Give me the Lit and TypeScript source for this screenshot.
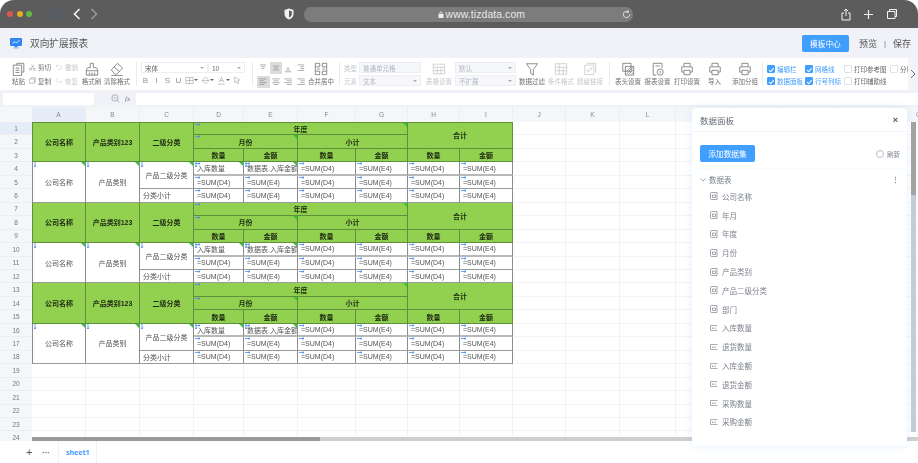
import { css, html, LitElement, svg } from "lit";
import { customElement } from "lit/decorators.js";

type Cell = {
	r: number;
	c: number;
	rs?: number;
	cs?: number;
	text?: string;
	kind: "head" | "center" | "left";
	arrow?: "h" | "v" | "both";
	tri?: boolean;
	thick?: boolean;
};

const S = (body: unknown, w = 14, h = 14) => html`<svg
	width=${w}
	height=${h}
	viewBox="0 0 16 16"
	fill="none"
	stroke="currentColor"
	stroke-width="0.9"
>${body}</svg>`;

const printer = S(svg`<path d="M4.5 5V1.5h7V5M2 5.5h12v6h-2.5M4.5 11.5H2v-6M4.5 9.5h7v5h-7z" />`);
const icons = {
	paste: S(svg`<path d="M5.5 3.5V1.5h8v10h-2M1.5 3.5H11v12H1.5zM4 7h4.5M4 9.5h4.5M4 12h4.5" />`),
	brush: S(svg`<path d="M6 1.5h3.5v5H13l1.5 2.5v6h-13V9L3 6.5h3zM1.5 10h13M5 15v-3M8 15v-3M11 15v-3" />`),
	eraser: S(svg`<path d="M1.5 9 8.5 1.5 14.5 7l-7 7H5.5zM4.5 5.5 11 11M1.500 15.500h13" />`),
	merge: S(svg`<path d="M1.5 1.5h5v4h-5zM9.5 1.5h5v4h-5zM1.5 10.5h5v4h-5zM9.5 10.5h5v4h-5zM1.5 5.5v5M14.5 5.5v5M3.5 8h3M12.5 8h-3" />`),
	table: S(svg`<path d="M1.5 2.5h13v11h-13zM1.5 6h13M1.5 9.8h13M6 6v7.5M10.3 6v7.5" />`),
	filter: S(svg`<path d="M1.5 2h13L9.500 8.500V15l-3-2V8.500z" />`),
	cond: S(svg`<path d="M1.5 2h13v12h-13zM1.5 6h13M1.5 10h13M6 2v12M10.5 6v8" />`),
	link: S(svg`<path d="M4 1.5h10.5V12M2 3.5h10.5v11H2zM6 10.500l3-3M5.500 8.500 4.500 10l1.500 1.500L7.500 10.500M9.500 9.500l1-1.500L9 6.500 7.500 7.500" />`),
	head: S(svg`<path d="M2 1.5h9.5v9H2zM5 5h9.500v10H5z" /><path d="M6 14l8-8M6 11l5-5M9 14l5-5M12 14l2-2" />`),
	report: S(svg`<path d="M6 15H2.5V1.5h10V7M5 4.5h5" /><circle cx="10.5" cy="11.5" r="3.5" /><path d="M10.5 10v3" />`),
	printer,
};

const small = {
	cut: S(svg`<circle cx="3.5" cy="12" r="2.5" /><circle cx="12.5" cy="12" r="2.5" /><path d="M5 10 11 1.5M11 10 5 1.5" />`, 9, 9),
	copy: S(svg`<path d="M5 4V1.5h9.5v10H12M1.5 4.5H12v10H1.5z" />`, 9, 9),
	undo: S(svg`<path d="M5 2 2 5l3 3M2 5h8.5a3.5 3.5 0 0 1 0 7H5" />`, 9, 9),
	redo: S(svg`<path d="M11 8l3 3-3 3M14 11H5a3 3 0 0 1 0-6h1" />`, 9, 9),
	border: S(svg`<path d="M1.5 2.5h13v11h-13zM8 2.5v11M1.5 8h13" />`, 9, 9),
	fill: S(svg`<path d="M8 1.5 14 8l-6 6-6-6zM2 8h12" />`, 9, 9),
	color: S(svg`<path d="M4 11 8 2l4 9M5.5 8h5M2 14.5h12" />`, 9, 9),
	clear: S(svg`<path d="M3 2l9 5-3.5 1.5L10 13l-2 1-2-4.5L3 12z" />`, 9, 9),
	zoom: S(svg`<circle cx="7" cy="7" r="5.5" /><path d="M11 11l4 4M4.5 7h5" />`, 9, 9),
};

const alignIcon = (rows: number[][]) =>
	S(svg`${rows.map(
		([x1, x2, y]) => svg`<line x1=${x1} x2=${x2} y1=${y} y2=${y} />`,
	)}`, 10, 10);

const columnWidths = [54, 54, 54, 50, 54, 58, 52, 52, 53, 53, 54, 56, 54, 54, 54, 54, 54];
// M to P sit under the data panel, so their letters never show
const letters = "ABCDEFGHIJKL    Q".split("").map((l) => l.trim());
const rowCount = 24;

const buildCells = () => {
	const cells: Cell[] = [];
	for (const r0 of [1, 7, 13]) {
		const add = (dr: number, c: number, rest: Omit<Cell, "r" | "c">) =>
			cells.push({ r: r0 + dr, c, ...rest });
		add(0, 0, { rs: 3, text: "公司名称", kind: "head" });
		add(0, 1, { rs: 3, text: "产品类别123", kind: "head" });
		add(0, 2, { rs: 3, text: "二级分类", kind: "head" });
		add(0, 3, { cs: 4, text: "年度", kind: "head", arrow: "h", tri: true });
		add(0, 7, { rs: 2, cs: 2, text: "合计", kind: "head" });
		add(1, 3, { cs: 2, text: "月份", kind: "head", arrow: "h", tri: true });
		add(1, 5, { cs: 2, text: "小计", kind: "head" });
		[3, 4, 5, 6, 7, 8].forEach((c, i) =>
			add(2, c, { text: i % 2 ? "金额" : "数量", kind: "head" }),
		);
		add(3, 0, { rs: 3, text: "公司名称", kind: "center", arrow: "v", tri: true });
		add(3, 1, { rs: 3, text: "产品类别", kind: "center", arrow: "v", tri: true });
		add(3, 2, { rs: 2, text: "产品二级分类", kind: "center", arrow: "v", tri: true });
		add(5, 2, { text: "分类小计", kind: "left" });
		for (let dr = 3; dr < 6; dr++) {
			[3, 4, 5, 6, 7, 8].forEach((c, i) => {
				const sum = i % 2 ? "=SUM(E4)" : "=SUM(D4)";
				let text = sum;
				if (dr === 3 && c === 3) text = "入库数量";
				if (dr === 3 && c === 4) text = "数据表.入库金额";
				add(dr, c, {
					text,
					kind: "left",
					arrow: dr === 3 && c < 5 ? "both" : "h",
					tri: dr === 3 && c < 5,
					thick: dr === 3,
				});
			});
		}
	}
	return cells;
};

const fields = [
	["公司名称", "d"],
	["年月", "d"],
	["年度", "d"],
	["月份", "d"],
	["产品类别", "d"],
	["产品二级分类", "d"],
	["部门", "d"],
	["入库数量", "m"],
	["退货数量", "m"],
	["入库金额", "m"],
	["退货金额", "m"],
	["采购数量", "m"],
	["采购金额", "m"],
];

@customElement("app-root")
export class AppRoot extends LitElement {
	static override styles = css`
		:host {
			display: block;
			width: 918px;
			height: 463px;
			background: #fff;
			font-family: "Liberation Sans", "Noto Sans CJK SC", sans-serif;
			color: #606266;
		}
		.app {
			position: relative;
			width: 918px;
			height: 463px;
			overflow: hidden;
			display: flex;
			flex-direction: column;
			filter: blur(0.4px);
		}
		.browser {
			height: 28px;
			flex: none;
			background: #5c5c5c;
			border-radius: 14px 14px 0 0;
			display: flex;
			align-items: center;
			color: #f4f4f4;
			padding-left: 7px;
		}
		.dot {
			width: 6px;
			height: 6px;
			border-radius: 50%;
			margin-right: 3.7px;
			flex: none;
		}
		.side {
			margin-left: 14px;
			width: 13px;
			height: 11px;
			box-sizing: border-box;
			border: 1px solid #4e5d6e;
			border-radius: 2px;
			background: linear-gradient(90deg, #5c5c5c 3px, #4e5d6e 3px, #4e5d6e 4px, #5c5c5c 4px);
			flex: none;
		}
		.nav {
			display: flex;
			gap: 9px;
			margin-left: 10px;
		}
		.shield {
			margin-left: 186px;
			display: flex;
		}
		.address {
			margin-left: 10px;
			width: 329px;
			height: 15px;
			background: #7c7c7c;
			border-radius: 7px;
			display: flex;
			align-items: center;
			justify-content: flex-end;
			padding-right: 2px;
			box-sizing: border-box;
			font-size: 10.4px;
			color: #e8e8e8;
			gap: 2px;
			flex: none;
		}
		.url {
			margin-right: 95px;
			letter-spacing: 0.1px;
		}
		.browser-right {
			margin-left: 208px;
			display: flex;
			gap: 12px;
			align-items: center;
		}
		.titlebar {
			height: 30px;
			flex: none;
			background: #f0f2f7;
			display: flex;
			align-items: center;
			padding: 0 7px 0 10px;
		}
		.title {
			font-size: 9.7px;
			margin-left: 8px;
			color: #555;
			font-family: "Noto Sans CJK SC", sans-serif;
		}
		.primary {
			background: #409eff;
			color: #fff;
			border-radius: 2px;
			display: flex;
			align-items: center;
			justify-content: center;
			font-size: 7.7px;
			font-family: "Noto Sans CJK SC", sans-serif;
		}
		.template {
			margin-left: auto;
			width: 47px;
			height: 17px;
		}
		.title-action {
			font-size: 9px;
			color: #555;
			font-family: "Noto Sans CJK SC", sans-serif;
		}
		.preview {
			margin-left: 10px;
		}
		.pipe {
			font-size: 8px;
			color: #777;
			margin: 0 7px;
		}
		.toolbar {
			height: 32px;
			flex: none;
			background: #fff;
			display: flex;
			padding-left: 12px;
			position: relative;
			font-size: 6.5px;
			font-family: "Noto Sans CJK SC", sans-serif;
			color: #707070;
			white-space: nowrap;
		}
		.sep {
			width: 1px;
			background: #ececec;
			margin: 4px 4px 4px 5px;
			flex: none;
		}
		.group {
			display: flex;
			flex: none;
			align-items: flex-start;
			padding-top: 4px;
			box-sizing: border-box;
		}
		.g1 { width: 119px; gap: 4px; }
		.g2 { width: 106px; flex-direction: column; gap: 2px; }
		.g3 { width: 77px; gap: 1px; }
		.g4 { width: 260px; gap: 3px; }
		.g5 { width: 143px; gap: 3.5px; padding-left: 1px; }
		.g6 { flex: 1; padding-top: 5px; }
		.tool {
			display: flex;
			flex-direction: column;
			align-items: center;
			justify-content: space-between;
			height: 24px;
			flex: none;
		}
		.tool span {
			line-height: 9px;
		}
		.w13 { width: 13px; }
		.w19 { width: 19px; }
		.w26 { width: 26px; }
		.eraser-tool { margin-left: -1px; }
		.table-tool { margin-left: 2px; }
		.import-tool { margin: 0 7.5px 0 4.5px; }
		.enabled { color: #707070; }
		.off {
			color: #c8c8c8;
		}
		.pair {
			display: flex;
			flex-direction: column;
			gap: 3.5px;
		}
		.pair div {
			display: flex;
			align-items: center;
			gap: 2px;
			height: 10px;
		}
		.pair-cut { width: 22px; }
		.pair-undo { width: 23px; }
		.select {
			border: 1px solid #eceef2;
			height: 11px;
			box-sizing: border-box;
			display: flex;
			align-items: center;
			justify-content: space-between;
			padding: 0 3px;
			font-size: 6.5px;
			color: #666;
		}
		.select::after {
			content: "";
			border: 2px solid transparent;
			border-top: 2.5px solid #aaa;
			border-bottom: 0;
		}
		.select.no-caret::after {
			display: none;
		}
		.select.dis {
			background: #f5f7fa;
			color: #b4b8c0;
		}
		.font-name { width: 67px; }
		.font-size { width: 37px; }
		.font-row {
			display: flex;
			gap: 0;
		}
		.format-row {
			display: flex;
			align-items: center;
			gap: 2px;
			height: 10px;
			color: #8a8f98;
			font-size: 8px;
		}
		.format-row i {
			width: 9px;
			text-align: center;
			font-style: normal;
			font-family: "Liberation Sans", sans-serif;
		}
		.caret {
			border: 2px solid transparent;
			border-top: 2.5px solid #666;
			border-bottom: 0;
			margin: 0 1px 0 -2px;
		}
		.align-grid {
			display: grid;
			grid-template-columns: repeat(4, 12.5px);
			grid-auto-rows: 12px;
			row-gap: 2px;
			flex: none;
			color: #777;
		}
		.align-grid div {
			display: flex;
			align-items: center;
			justify-content: center;
		}
		.align-grid .active {
			background: #dcdcdc;
		}
		.form-grid {
			display: grid;
			grid-template-columns: 13px 62px;
			column-gap: 2px;
			row-gap: 2px;
			align-items: center;
			color: #c0c4cc;
			flex: none;
		}
		.form-grid.single {
			grid-template-columns: 61px;
		}
		.checks {
			display: grid;
			grid-template-columns: 38px 39px 46px 30px;
			grid-auto-rows: 12px;
			row-gap: 0;
			color: #666;
		}
		.check {
			display: flex;
			align-items: center;
			gap: 2px;
		}
		.box {
			width: 6px;
			height: 6px;
			border: 0.5px solid #e2e2e2;
			border-radius: 1px;
			flex: none;
			display: block;
		}
		.check.on {
			color: #409eff;
		}
		.check.on .box {
			background: #409eff;
			border-color: #409eff;
			position: relative;
		}
		.check.on .box::after {
			content: "";
			position: absolute;
			left: 1.5px;
			top: 0.5px;
			width: 2px;
			height: 3.5px;
			border: solid #fff;
			border-width: 0 0.8px 0.8px 0;
			transform: rotate(40deg);
		}
		.more {
			position: absolute;
			right: 0;
			top: 0;
			bottom: 0;
			width: 10px;
			background: #f3f4f7;
			display: flex;
			align-items: center;
			justify-content: center;
			color: #667;
		}
		.formula {
			height: 17px;
			flex: none;
			background: #f0f2f7;
			display: flex;
			align-items: center;
			padding-left: 3px;
			box-sizing: border-box;
			color: #777;
		}
		.name-box {
			width: 91px;
			height: 12px;
			background: #fff;
			border-radius: 1px;
		}
		.fx-icon {
			margin-left: 17px;
			display: flex;
		}
		.fx {
			font: italic 7px "Liberation Serif", serif;
			margin: 0 6px 0 5px;
		}
		.fx-input {
			flex: 1;
			height: 12px;
			background: #fff;
		}
		.sheet {
			flex: 1;
			overflow: hidden;
			min-height: 0;
			background: #fff;
		}
		.grid {
			display: grid;
			grid-template-rows: 15px repeat(24, 13.46px);
			font-size: 7px;
			color: #555;
		}
		.corner {
			background: #f5f6f8;
		}
		.col-head {
			background: #f5f6f8;
			border-right: 1px solid #ebedf0;
			display: flex;
			align-items: center;
			justify-content: center;
			font-size: 6.5px;
			color: #888;
			box-sizing: border-box;
		}
		.col-head.sel,
		.row-head.sel {
			background: #e6ecf8;
		}
		.row-head {
			background: #f5f6f8;
			display: flex;
			align-items: center;
			justify-content: center;
			font-size: 6.5px;
			color: #777;
			border-bottom: 1px solid #eceef0;
			box-sizing: border-box;
		}
		.empty {
			border-right: 1px solid #f2f3f5;
			border-bottom: 1px solid #f2f3f5;
			box-sizing: border-box;
		}
		.cell {
			position: relative;
			display: flex;
			align-items: center;
			box-sizing: border-box;
			overflow: hidden;
			white-space: nowrap;
			font-family: "Liberation Sans", "Noto Sans CJK SC", sans-serif;
		}
		.cell.head {
			background: #92d050;
			border-right: 1px solid #5f8f3b;
			border-bottom: 1px solid #5f8f3b;
			justify-content: center;
			font-weight: 700;
			color: #1d2a12;
		}
		.cell.head.top {
			border-top: 1px solid #5f8f3b;
		}
		.cell.head.first {
			border-left: 1px solid #5f8f3b;
		}
		.cell.center,
		.cell.left {
			background: #fff;
			border-right: 1px solid #8c8c8c;
			border-bottom: 1px solid #9a9a9a;
		}
		.cell.center.first {
			border-left: 1px solid #8c8c8c;
		}
		.cell.thick {
			border-bottom: 2px solid #b8b8b8;
		}
		.cell.center {
			justify-content: center;
		}
		.cell.left {
			padding-left: 3px;
		}
		.tri {
			position: absolute;
			top: 0;
			right: 0;
			border-top: 4px solid #35c43a;
			border-left: 4px solid transparent;
		}
		.arrow {
			position: absolute;
			left: 1px;
			top: 0;
			color: #3f8cf0;
			display: flex;
		}
		.hscroll {
			position: absolute;
			left: 32px;
			top: 437px;
			width: 886px;
			height: 4px;
			background: #cfcfcf;
		}
		.hthumb {
			width: 288px;
			height: 100%;
			background: #9b9b9b;
		}
		.tabs {
			height: 22px;
			flex: none;
			background: #fff;
			display: flex;
			align-items: center;
			padding-left: 26px;
			color: #555;
		}
		.plus {
			font-size: 11px;
			width: 16px;
		}
		.dots {
			font-size: 8px;
			font-weight: 700;
			width: 16px;
		}
		.tab {
			height: 22px;
			padding: 0 7px;
			border-left: 1px solid #f0f0f0;
			border-right: 1px solid #f0f0f0;
			display: flex;
			align-items: center;
			color: #409eff;
			font-weight: 700;
			font-size: 7px;
			font-family: "Noto Sans", sans-serif;
		}
		.panel {
			position: absolute;
			left: 692px;
			top: 108px;
			width: 215px;
			height: 338px;
			background: #fff;
			border-radius: 4px;
			box-shadow: 0 0 10px rgba(64, 158, 255, 0.14);
			font-family: "Noto Sans CJK SC", sans-serif;
			color: #7d828c;
		}
		.panel-head {
			height: 23px;
			display: flex;
			align-items: center;
			justify-content: space-between;
			padding: 0 8px;
			font-size: 8.5px;
			color: #666b75;
			border-bottom: 1px solid #f3f5f8;
		}
		.close {
			font: 700 9px "Liberation Sans", sans-serif;
			color: #555;
			margin-right: 1px;
		}
		.panel-actions {
			height: 36px;
			box-sizing: border-box;
			padding: 13px 7px 0 8px;
			display: flex;
			justify-content: space-between;
			align-items: flex-start;
			box-shadow: 0 2px 3px -2px rgba(64, 158, 255, 0.1);
		}
		.add {
			width: 55px;
			height: 17px;
		}
		.refresh {
			display: flex;
			align-items: center;
			gap: 3px;
			font-size: 6.5px;
			margin-top: 4px;
		}
		.spin {
			width: 6px;
			height: 6px;
			border: 0.7px solid #bbb;
			border-radius: 50%;
		}
		.tree-title {
			display: flex;
			align-items: center;
			height: 11px;
			margin-top: 6px;
			padding: 0 8px;
			font-size: 7.5px;
			gap: 3px;
		}
		.kebab {
			margin-left: auto;
			font: 700 7px "Liberation Sans", sans-serif;
			color: #999;
		}
		.fields {
			margin-top: 2px;
		}
		.field {
			height: 18.8px;
			display: flex;
			align-items: center;
			padding-left: 18px;
			gap: 4px;
			font-size: 7.5px;
		}
		.vscroll {
			position: absolute;
			left: 911px;
			top: 122px;
			width: 5px;
			height: 310px;
			background: #c6ccd6;
		}
		.vthumb {
			height: 73px;
			background: #a3a3a3;
		}
	`;

	private renderCheck(label: string, on: boolean) {
		return html`<div class="check ${on ? "on" : ""}">
			<span class="box"></span><span>${label}</span>
		</div>`;
	}

	private renderBrowser() {
		return html`<div class="browser">
			<span class="dot" style="background:#d9574e"></span>
			<span class="dot" style="background:#e5ad1f"></span>
			<span class="dot" style="background:#62bb47"></span>
			<span class="side"></span>
			<div class="nav">
				<svg width="8" height="12" viewBox="0 0 8 12" fill="none" stroke="#f2f2f2" stroke-width="1.6">
					<path d="M6.5 1 1.5 6l5 5" />
				</svg>
				<svg width="8" height="12" viewBox="0 0 8 12" fill="none" stroke="#999" stroke-width="1.6">
					<path d="M1.5 1l5 5-5 5" />
				</svg>
			</div>
			<div class="shield">
				<svg width="10" height="12" viewBox="0 0 10 12">
					<path d="M5 .5 9.5 2v4c0 3-2 4.8-4.5 5.5C2.5 10.8.5 9 .5 6V2z" fill="#f2f2f2" />
					<path d="M5 2.5 7.8 3.3V6C7.8 7.800 6.500 9 5 9.500z" fill="#5c5c5c" />
				</svg>
			</div>
			<div class="address">
				<svg width="6" height="7" viewBox="0 0 6 7" fill="#eee">
					<path d="M.5 3h5v4h-5zM1.5 3V2a1.5 1.5 0 0 1 3 0v1h-.8V2a.7.7 0 0 0-1.400 0v1z" />
				</svg>
				<span class="url">www.tizdata.com</span>
				<svg width="9" height="9" viewBox="0 0 10 10" fill="none" stroke="#eee" stroke-width="1">
					<path d="M8.5 5A3.5 3.5 0 1 1 7 2.1M7 .5v2h-2" />
				</svg>
			</div>
			<div class="browser-right">
				<svg width="10" height="13" viewBox="0 0 10 13" fill="none" stroke="#f2f2f2" stroke-width="1">
					<path d="M3 5H1v7h8V5H7M5 8V1M3 3l2-2 2 2" />
				</svg>
				<svg width="11" height="11" viewBox="0 0 11 11" stroke="#f2f2f2" stroke-width="1.2">
					<path d="M5.5 1v9M1 5.5h9" />
				</svg>
				<svg width="12" height="12" viewBox="0 0 12 12" fill="none" stroke="#f2f2f2" stroke-width="1">
					<path d="M3.5 3V1.5h7v7H9M1.5 3.5H9v7H1.5z" />
				</svg>
			</div>
		</div>`;
	}

	private renderToolbar() {
		return html`<div class="toolbar">
			<div class="group g1">
				<div class="tool w13">${icons.paste}<span>粘贴</span></div>
				<div class="pair pair-cut">
					<div>${small.cut}<span>剪切</span></div>
					<div>${small.copy}<span>复制</span></div>
				</div>
				<div class="pair pair-undo off">
					<div>${small.undo}<span>撤销</span></div>
					<div>${small.redo}<span>恢复</span></div>
				</div>
				<div class="tool w19">${icons.brush}<span>格式刷</span></div>
				<div class="tool w26 eraser-tool">${icons.eraser}<span>清除格式</span></div>
			</div>
			<div class="sep"></div>
			<div class="group g2">
				<div class="font-row">
					<div class="select font-name">宋体</div>
					<div class="select font-size">10</div>
				</div>
				<div class="format-row">
					<i>B</i><i>I</i><i>S</i><i>U</i>
					${small.border}<span class="caret"></span>
					${small.fill}<span class="caret"></span>
					${small.color}<span class="caret"></span>
					${small.clear}
				</div>
			</div>
			<div class="sep"></div>
			<div class="group g3">
				<div class="align-grid">
					<div>${alignIcon([[3, 13, 3], [5, 11, 6], [6, 10, 9]])}</div>
					<div class="active">${alignIcon([[3, 13, 5], [5, 11, 8], [3, 13, 11]])}</div>
					<div>${alignIcon([[6, 10, 8], [5, 11, 11], [3, 13, 14]])}</div>
					<div>${alignIcon([[3, 13, 3], [7, 13, 6], [7, 13, 9], [3, 13, 12]])}</div>
					<div class="active">${alignIcon([[2, 14, 3], [2, 10, 6], [2, 14, 9], [2, 10, 12]])}</div>
					<div>${alignIcon([[2, 14, 3], [4, 12, 6], [2, 14, 9], [4, 12, 12]])}</div>
					<div>${alignIcon([[2, 14, 3], [6, 14, 6], [2, 14, 9], [6, 14, 12]])}</div>
					<div>${alignIcon([[2, 14, 3], [7, 14, 6], [7, 14, 9], [2, 14, 12]])}</div>
				</div>
				<div class="tool w26">${icons.merge}<span>合并居中</span></div>
			</div>
			<div class="sep"></div>
			<div class="group g4 off">
				<div class="form-grid">
					<span>类型</span><div class="select dis no-caret">普通单元格</div>
					<span>元素</span><div class="select dis">文本</div>
				</div>
				<div class="tool w26 table-tool">${icons.table}<span>表格设置</span></div>
				<div class="form-grid single">
					<div class="select dis">默认</div>
					<div class="select dis">不扩展</div>
				</div>
				<div class="tool w26 enabled">${icons.filter}<span>数据过滤</span></div>
				<div class="tool w26">${icons.cond}<span>条件格式</span></div>
				<div class="tool w26">${icons.link}<span>超级链接</span></div>
			</div>
			<div class="sep"></div>
			<div class="group g5">
				<div class="tool w26">${icons.head}<span>表头设置</span></div>
				<div class="tool w26">${icons.report}<span>报表设置</span></div>
				<div class="tool w26">${icons.printer}<span>打印设置</span></div>
				<div class="tool w13 import-tool">${icons.printer}<span>导入</span></div>
				<div class="tool w26">${icons.printer}<span>添加分组</span></div>
			</div>
			<div class="sep"></div>
			<div class="group g6">
				<div class="checks">
					${this.renderCheck("编辑栏", true)}
					${this.renderCheck("网格线", true)}
					${this.renderCheck("打印参考图", false)}
					${this.renderCheck("分栏", false)}
					${this.renderCheck("数据面板", true)}
					${this.renderCheck("行号列标", true)}
					${this.renderCheck("打印辅助线", false)}
				</div>
			</div>
			<div class="more">
				<svg width="6" height="10" viewBox="0 0 6 10" fill="none" stroke="currentColor">
					<path d="M1 1l4 4-4 4" />
				</svg>
			</div>
		</div>`;
	}

	private renderArrow(arrow?: string) {
		if (!arrow) return "";
		const h = arrow === "h" || arrow === "both";
		const v = arrow === "v" || arrow === "both";
		return html`<span class="arrow">
			<svg width="7" height="7" viewBox="0 0 7 7" fill="none" stroke="currentColor" stroke-width="0.8">
				${h ? svg`<path d="M0 1.5h5M3.5 .3 5 1.5 3.5 2.7" />` : ""}
				${v ? svg`<path d="M1 0v5M0 3.5 1 5 2 3.5" />` : ""}
			</svg>
		</span>`;
	}

	private renderSheet() {
		const cells = buildCells();
		const taken = new Set<string>();
		for (const cell of cells) {
			for (let r = 0; r < (cell.rs ?? 1); r++) {
				for (let c = 0; c < (cell.cs ?? 1); c++) {
					taken.add(`${cell.r + r}:${cell.c + c}`);
				}
			}
		}
		const blanks: { r: number; c: number }[] = [];
		for (let r = 1; r <= rowCount; r++) {
			columnWidths.forEach((_, c) => {
				if (!taken.has(`${r}:${c}`)) blanks.push({ r, c });
			});
		}
		const columns = `32px ${columnWidths.map((w) => `${w}px`).join(" ")}`;
		return html`<div class="sheet">
			<div class="grid" style="grid-template-columns:${columns}">
				<div class="corner"></div>
				${letters.map(
					(l, i) => html`<div class="col-head ${i === 0 ? "sel" : ""}">${l}</div>`,
				)}
				${Array.from({ length: rowCount }, (_, i) => html`<div
					class="row-head ${i === 0 ? "sel" : ""}"
					style="grid-row:${i + 2};grid-column:1"
				>${i + 1}</div>`)}
				${blanks.map(
					(b) => html`<div
						class="empty"
						style="grid-row:${b.r + 1};grid-column:${b.c + 2}"
					></div>`,
				)}
				${cells.map(
					(cell) => html`<div
						class="cell ${cell.kind} ${cell.thick ? "thick" : ""} ${cell.r === 1 ? "top" : ""} ${cell.c === 0 ? "first" : ""}"
						style="grid-row:${cell.r + 1} / span ${cell.rs ?? 1};grid-column:${cell.c + 2} / span ${cell.cs ?? 1}"
					>
						${this.renderArrow(cell.arrow)}
						${cell.text}
						${cell.tri ? html`<span class="tri"></span>` : ""}
					</div>`,
				)}
			</div>
		</div>`;
	}

	private renderPanel() {
		return html`<div class="panel">
			<div class="panel-head"><span>数据面板</span><span class="close">×</span></div>
			<div class="panel-actions">
				<div class="primary add">添加数据集</div>
				<div class="refresh"><span class="spin"></span>刷新</div>
			</div>
			<div class="tree-title">
				<svg width="6" height="6" viewBox="0 0 6 6" fill="none" stroke="currentColor" stroke-width="0.7">
					<path d="M.5 1.5 3 4l2.5-2.5" />
				</svg>
				数据表
				<span class="kebab">⋮</span>
			</div>
			<div class="fields">
				${fields.map(
					([name, type]) => html`<div class="field">
						${type === "d"
							? html`<svg width="8" height="8" viewBox="0 0 8 8" fill="none" stroke="#8a8f98" stroke-width="0.8">
									<path d="M1.5 .5H7v7H1.5a1 1 0 0 1-1-1v-5a1 1 0 0 1 1-1zM2.5 3h3v2.5h-3z" />
								</svg>`
							: html`<svg width="8" height="8" viewBox="0 0 8 8" fill="none" stroke="#8a8f98" stroke-width="0.7">
									<path d="M7.5 1.5H.5v5h7M2.5 3.500v1.500M4 3.500v1.500M5.500 3.500v1.500" />
								</svg>`}
						<span>${name}</span>
					</div>`,
				)}
			</div>
		</div>`;
	}

	override render() {
		return html`<div class="app">
			${this.renderBrowser()}
			<div class="titlebar">
				<svg width="12" height="12" viewBox="0 0 12 12">
					<rect x="0" y="1" width="12" height="8" rx="1" fill="#2f86f0" />
					<rect x="4.5" y="9" width="3" height="1.5" fill="#2f86f0" />
					<rect x="3" y="10.5" width="6" height="1" fill="#8ec0f8" />
					<path d="M2.5 6.5 5 4.5 6.5 6 9.5 3" fill="none" stroke="#fff" stroke-width="0.8" />
				</svg>
				<span class="title">双向扩展报表</span>
				<div class="primary template">模板中心</div>
				<span class="title-action preview">预览</span>
				<span class="pipe">|</span>
				<span class="title-action">保存</span>
			</div>
			${this.renderToolbar()}
			<div class="formula">
				<div class="name-box"></div>
				<span class="fx-icon">${small.zoom}</span>
				<span class="fx">fx</span>
				<div class="fx-input"></div>
			</div>
			${this.renderSheet()}
			<div class="tabs">
				<span class="plus">+</span>
				<span class="dots">···</span>
				<div class="tab">sheet1</div>
			</div>
			<div class="hscroll"><div class="hthumb"></div></div>
			${this.renderPanel()}
			<div class="vscroll"><div class="vthumb"></div></div>
		</div>`;
	}
}

declare global {
	interface HTMLElementTagNameMap {
		"app-root": AppRoot;
	}
}
